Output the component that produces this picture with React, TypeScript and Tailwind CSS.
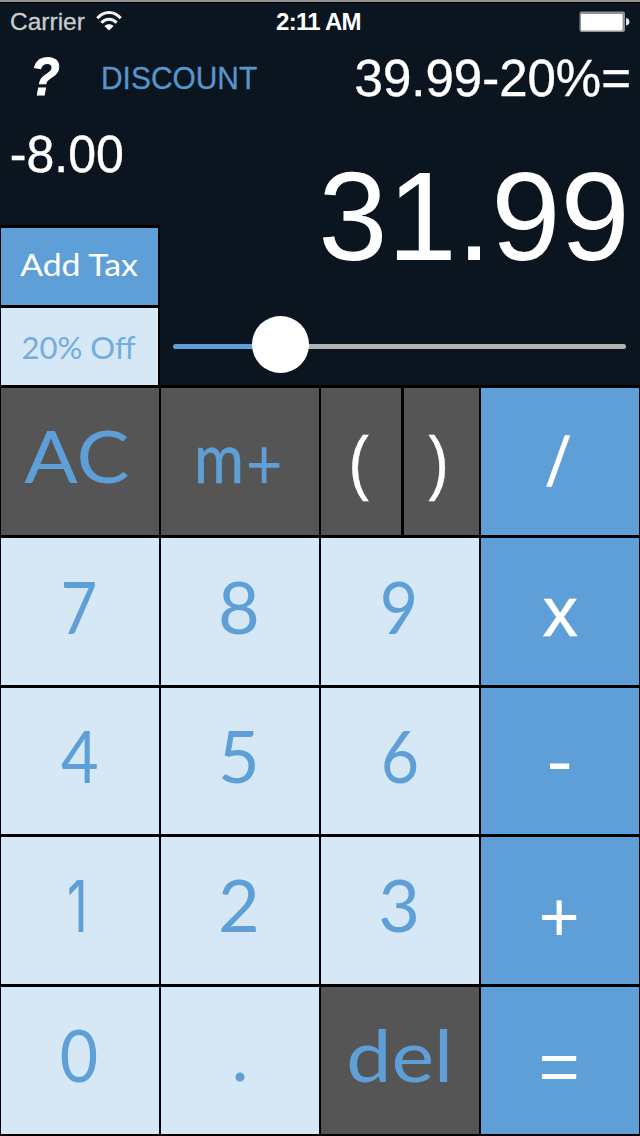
import type { ReactNode } from "react";

type KeyDef = { label: ReactNode; box: string; text: string };

const DARK = "bg-[#555555]";
const PALE = "bg-[#d6e7f5]";
const BLUE = "bg-[#5f9fd7]";
const GOTHIC = "font-['Lato',sans-serif] text-[#5f9fd7] text-[72px]";
const HELV = "font-['Liberation_Sans',sans-serif] text-white text-[70px]";

const rows: KeyDef[][] = [
  [
    { label: "7", box: PALE, text: `${GOTHIC} pt-[32px] scale-x-[0.88] -ml-[2px]` },
    { label: "8", box: PALE, text: `${GOTHIC} pt-[32px] -ml-[2px]` },
    { label: "9", box: PALE, text: `${GOTHIC} pt-[32px] scale-x-[0.92] -ml-[2px]` },
    { label: "x", box: BLUE, text: `${HELV} pt-[39px] [-webkit-text-stroke:0.6px_white]` },
  ],
  [
    { label: "4", box: PALE, text: `${GOTHIC} pt-[31px] scale-x-[0.9]` },
    { label: "5", box: PALE, text: `${GOTHIC} pt-[31px] -ml-[2px]` },
    { label: "6", box: PALE, text: `${GOTHIC} pt-[31px] scale-x-[0.92]` },
    { label: "-", box: BLUE, text: `${HELV} pt-[38px] scale-x-[1.12] -ml-[2px]` },
  ],
  [
    { label: "1", box: PALE, text: "font-['Inter',sans-serif] text-[#5f9fd7] text-[71px] pt-[34px] scale-x-[0.72] -ml-[4px]" },
    { label: "2", box: PALE, text: `${GOTHIC} pt-[31px] -ml-[2px]` },
    { label: "3", box: PALE, text: `${GOTHIC} pt-[31px] -ml-[2px]` },
    { label: "+", box: BLUE, text: `${HELV} pt-[45px] -ml-[2px]` },
  ],
  [
    { label: "0", box: PALE, text: `${GOTHIC} pt-[31px] scale-x-[0.92] -ml-[2px]` },
    { label: ".", box: PALE, text: `${GOTHIC} pt-[30px]` },
    { label: "del", box: DARK, text: `${GOTHIC} pt-[31px] scale-x-[1.12]` },
    { label: "=", box: BLUE, text: `${HELV} pt-[45px] -ml-[2px]` },
  ],
];

function Key({ label, box, text }: KeyDef) {
  return (
    <button className={`flex h-full min-w-0 items-start justify-center overflow-hidden ${box}`}>
      <span className={`whitespace-nowrap leading-none ${text}`}>{label}</span>
    </button>
  );
}

function Wifi() {
  return (
    <svg className="ml-[11px] mt-[9px] h-[20px] w-[26px]" viewBox="0 0 26 20" fill="none" stroke="#f4f4f4" strokeWidth="3">
      <path d="M1.3 7.2C8 -0.4 18 -0.4 24.7 7.2" />
      <path d="M5.4 11.8C9.8 7.2 16.2 7.2 20.6 11.8" />
      <path d="M13 19.500L8.400 15C11 12.600 15 12.600 17.600 15Z" fill="#fff" stroke="none" />
    </svg>
  );
}

function Battery() {
  return (
    <svg className="ml-auto mr-[10px] mt-[9px] h-[22px] w-[51px]" viewBox="0 0 51 22">
      <rect x="0.5" y="0.5" width="45.5" height="20.5" rx="2" fill="#8d9297" />
      <rect x="2" y="3" width="41.5" height="16.5" rx="1" fill="#fff" />
      <path d="M47 7C49.500 7.400 50.400 9 50.400 10.800S49.500 14.200 47 14.600Z" fill="#e5e7e9" />
    </svg>
  );
}

export default function App() {
  return (
    <div className="flex h-[1136px] w-[640px] flex-col overflow-hidden bg-[#0a1520] font-['Liberation_Sans',sans-serif] text-white">
      <header className="flex h-[46px] shrink-0 items-start border-t-2 border-[#929292] leading-none shadow-[inset_0_1px_0_#000]">
        <div className="flex w-[276px] items-start">
          <span className="ml-[10px] mt-[8px] text-[24.5px] text-[#c9ccce] [-webkit-text-stroke:0.3px_#c9ccce]">Carrier</span>
          <Wifi />
        </div>
        <span className="mt-[8px] whitespace-nowrap text-[24px] font-bold tracking-[-0.7px]">2:11 AM</span>
        <Battery />
      </header>

      <div className="flex h-[64px] shrink-0 items-start leading-none">
        <span className="ml-[30px] mt-[4px] w-[70px] origin-left scale-x-[0.92] text-[53px] font-bold italic [-webkit-text-stroke:1px_white]">?</span>
        <span className="ml-[1px] mt-[16px] origin-left scale-x-[0.935] text-[32px] text-[#5795cc] [-webkit-text-stroke:0.3px_#5795cc]">DISCOUNT</span>
        <span className="ml-auto mr-[9px] mt-[7px] text-[51px] [-webkit-text-stroke:0.4px_white]">39.99-20%=</span>
      </div>

      <div className="flex h-[275px] shrink-0">
        <div className="flex w-[160px] shrink-0 flex-col">
          <span className="h-[115px] origin-left scale-x-[0.98] whitespace-nowrap pl-[10px] pt-[19px] text-[51px] leading-none [-webkit-text-stroke:0.4px_white]">-8.00</span>
          <div className="flex h-[160px] flex-col gap-[3px] border-r-2 border-t-[3px] border-black bg-black pl-px font-['Lato',sans-serif]">
            <button className="flex h-[77px] items-start justify-center bg-[#5f9fd7] pr-[2px] pt-[21px] text-[31px] leading-none">
              <span className="scale-x-[1.09] whitespace-nowrap">Add Tax</span>
            </button>
            <button className="flex h-[77px] items-start justify-center bg-[#d6e7f5] pr-[2px] pt-[24px] text-[31px] leading-none text-[#74acdd]">
              <span className="whitespace-nowrap">20% Off</span>
            </button>
          </div>
        </div>
        <div className="flex grow flex-col">
          <span className="mr-[10px] mt-[43px] origin-right scale-x-[0.98] self-end whitespace-nowrap text-[127px] leading-none">31.99</span>
          <div className="ml-[13px] mt-[35px] flex h-[58px] items-center">
            <div className="mt-[4px] h-[5px] w-[84px] rounded-l bg-[#5f9fd7]" />
            <div className="z-10 -ml-[5px] h-[57px] w-[57px] shrink-0 rounded-full bg-white" />
            <div className="-ml-[3px] mr-[14px] mt-[4px] h-[5px] grow rounded-r bg-[#b3b3b3]" />
          </div>
        </div>
      </div>

      <main className="grid h-[751px] shrink-0 grid-cols-4 grid-rows-5 gap-x-[2.5px] gap-y-[3px] bg-black px-px pb-[2px] pt-[3px]">
        <Key label="AC" box={DARK} text={`${GOTHIC} pt-[31px] scale-x-[1.1] -ml-[7px]`} />
        <Key
          label={
            <>
              <span className="text-[69px] [-webkit-text-stroke:0.5px_#5f9fd7]">m</span>
              <span className="relative top-[6px] ml-[2px]">+</span>
            </>
          }
          box={DARK}
          text={`${GOTHIC} pt-[31px] scale-x-[0.88] -ml-[4px]`}
        />
        <div className="grid grid-cols-[80fr_75fr] gap-[3px]">
          <Key label="(" box={DARK} text={`${HELV} pt-[39px] -ml-[4px] scale-x-[0.85] [-webkit-text-stroke:0.6px_white]`} />
          <Key label=")" box={DARK} text={`${HELV} pt-[39px] -ml-[6px] scale-x-[0.85] [-webkit-text-stroke:0.6px_white]`} />
        </div>
        <Key label="/" box={BLUE} text={`${HELV} pt-[39px] -skew-x-[5deg]`} />
        {rows.flat().map((key, i) => (
          <Key key={i} {...key} />
        ))}
      </main>
    </div>
  );
}
